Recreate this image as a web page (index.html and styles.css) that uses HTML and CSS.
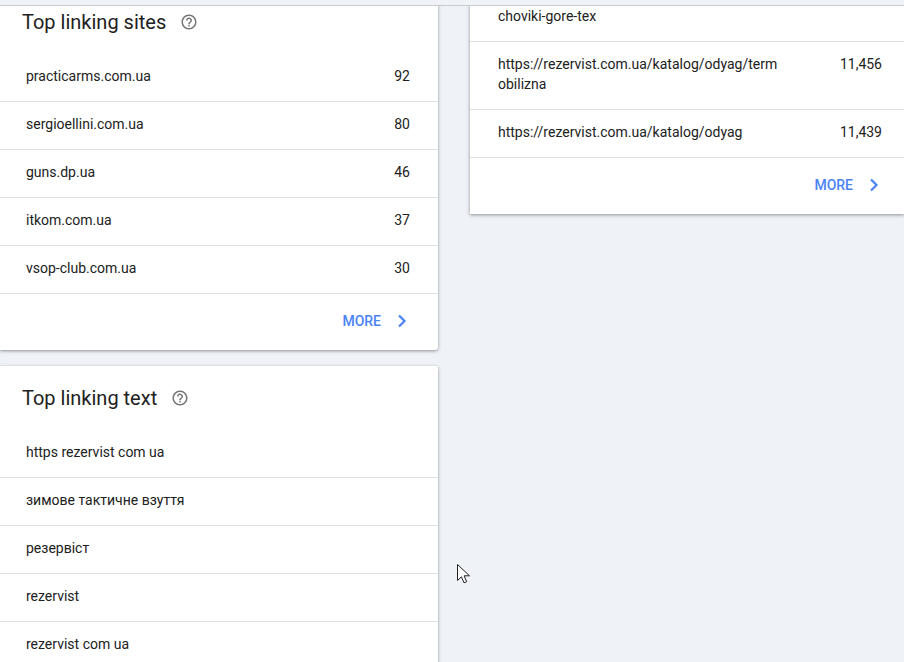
FILE: index.html
```html
<!DOCTYPE html>
<html lang="en">
<head>
<meta charset="utf-8">
<title>Links</title>
<link rel="stylesheet" href="styles.css">
</head>
<body>
<div class="topstrip"></div>
<div class="viewport">
  <main class="columns">
    <section class="column">
      <article class="card">
        <header class="card-head">
          <h2 class="card-title">Top linking sites</h2>
          <svg class="help" viewBox="0 0 24 24"><path d="M11 18h2v-2h-2v2zm1-16C6.48 2 2 6.48 2 12s4.48 10 10 10 10-4.48 10-10S17.52 2 12 2zm0 18c-4.41 0-8-3.59-8-8s3.59-8 8-8 8 3.59 8 8-3.59 8-8 8zm0-14c-2.21 0-4 1.79-4 4h2c0-1.1.9-2 2-2s2 .9 2 2c0 2-3 1.75-3 5h2c0-2.25 3-2.5 3-5 0-2.21-1.79-4-4-4z"/></svg>
        </header>
        <div class="row"><span class="label">practicarms.com.ua</span><span class="value">92</span></div>
        <div class="row"><span class="label">sergioellini.com.ua</span><span class="value">80</span></div>
        <div class="row"><span class="label">guns.dp.ua</span><span class="value">46</span></div>
        <div class="row"><span class="label">itkom.com.ua</span><span class="value">37</span></div>
        <div class="row"><span class="label">vsop-club.com.ua</span><span class="value">30</span></div>
        <footer class="card-foot">
          <span class="more">MORE</span>
          <svg class="chevron" viewBox="0 0 10 14"><path d="M2 1.5 7.5 7 2 12.5"/></svg>
        </footer>
      </article>
      <article class="card">
        <header class="card-head">
          <h2 class="card-title">Top linking text</h2>
          <svg class="help" viewBox="0 0 24 24"><path d="M11 18h2v-2h-2v2zm1-16C6.48 2 2 6.48 2 12s4.48 10 10 10 10-4.48 10-10S17.52 2 12 2zm0 18c-4.41 0-8-3.59-8-8s3.59-8 8-8 8 3.59 8 8-3.59 8-8 8zm0-14c-2.21 0-4 1.79-4 4h2c0-1.1.9-2 2-2s2 .9 2 2c0 2-3 1.75-3 5h2c0-2.25 3-2.5 3-5 0-2.21-1.79-4-4-4z"/></svg>
        </header>
        <div class="row"><span class="label">https rezervist com ua</span></div>
        <div class="row"><span class="label">зимове тактичне взуття</span></div>
        <div class="row"><span class="label">резервіст</span></div>
        <div class="row"><span class="label">rezervist</span></div>
        <div class="row"><span class="label">rezervist com ua</span></div>
      </article>
    </section>
    <section class="column">
      <article class="card card-wide">
        <div class="row row-clipped"><span class="label">choviki-gore-tex</span></div>
        <div class="row"><span class="label label-url">https://rezervist.com.ua/katalog/odyag/termobilizna</span><span class="value">11,456</span></div>
        <div class="row"><span class="label label-url">https://rezervist.com.ua/katalog/odyag</span><span class="value">11,439</span></div>
        <footer class="card-foot">
          <span class="more">MORE</span>
          <svg class="chevron" viewBox="0 0 10 14"><path d="M2 1.5 7.5 7 2 12.5"/></svg>
        </footer>
      </article>
    </section>
  </main>
  <svg class="cursor" viewBox="0 0 14 21"><path d="M1.5 1.5V17.5l3.9-3.7 2.6 6 2.7-1.1-2.6-5.9h5.4z"/></svg>
</div>
</body>
</html>
```

FILE: styles.css
```css
html, body {
  margin: 0;
  height: 100%;
  overflow: hidden;
  background: #eff2f7;
  font-family: Roboto, "Liberation Sans", sans-serif;
  color: #212121;
}

.topstrip {
  height: 5px;
  border-bottom: 1px solid #c9cbce;
  box-sizing: content-box;
}

.viewport {
  position: relative;
  height: 656px;
  overflow: hidden;
}

.columns {
  display: grid;
  grid-template-columns: 438px 434px;
  column-gap: 32px;
  margin-top: -16px;
  align-items: start;
}

.column {
  display: flex;
  flex-direction: column;
  gap: 16px;
}

.card {
  background: #fff;
  border-radius: 0 3px 3px 0;
  box-shadow: 0 1px 3px rgba(60, 64, 67, .45), 0 1px 5px rgba(60, 64, 67, .12);
}

.card-wide {
  border-radius: 0;
  padding-top: 16px;
}

.card-head {
  height: 64px;
  display: flex;
  align-items: center;
  gap: 14px;
  padding-left: 22px;
}

.card-title {
  margin: 0;
  font-size: 20px;
  font-weight: 400;
  line-height: 28px;
  color: #212121;
}

.help {
  width: 18px;
  height: 18px;
  fill: #757575;
}

.row {
  display: flex;
  justify-content: space-between;
  padding: 12px 28px 15px 26px;
  border-bottom: 1px solid #e0e0e0;
  font-size: 14px;
  line-height: 20px;
}

.card-wide .row {
  padding-left: 28px;
  padding-right: 22px;
}

.card-wide .row-clipped {
  padding-top: 0;
}

.label-url {
  width: 284px;
  word-break: break-all;
}

.card-foot {
  height: 54px;
  display: flex;
  align-items: center;
  justify-content: flex-end;
  gap: 16px;
  padding-right: 31px;
  padding-bottom: 2px;
}

.card-wide .card-foot {
  padding-right: 25px;
}

.more {
  font-size: 14px;
  font-weight: 500;
  line-height: 20px;
  color: #4b83f5;
}

.chevron {
  width: 10px;
  height: 14px;
  fill: none;
  stroke: #4b83f5;
  stroke-width: 2.2;
}

.cursor {
  position: absolute;
  left: 456px;
  top: 557px;
  width: 14px;
  height: 21px;
  fill: #fff;
  stroke: #222;
  stroke-width: 1;
}
```
